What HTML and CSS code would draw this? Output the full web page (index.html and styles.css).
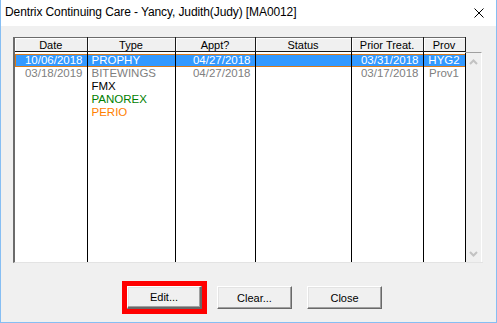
FILE: index.html
```html
<!DOCTYPE html>
<html lang="en">
<head>
  <meta charset="UTF-8">
  <title>Dentrix Continuing Care</title>
  <link rel="stylesheet" href="styles.css">
</head>
<body>
  <div id="window">
    <div class="titlebar">
      <span class="title">Dentrix Continuing Care - Yancy, Judith(Judy) [MA0012]</span>
      <svg class="close-x" width="10" height="10" viewBox="0 0 10 10">
        <path d="M0.5 0.5 L9.5 9.5 M9.5 0.5 L0.5 9.5" stroke="#000" stroke-width="1" fill="none"/>
      </svg>
    </div>
    <div class="content">
      <div class="listview">
        <div class="grid">
          <table>
            <thead>
              <tr>
                <th class="c-date">Date</th>
                <th class="c-type">Type</th>
                <th class="c-appt">Appt?</th>
                <th class="c-status">Status</th>
                <th class="c-prior">Prior Treat.</th>
                <th class="c-prov">Prov</th>
              </tr>
            </thead>
            <tbody>
              <tr class="gap"><td></td><td></td><td></td><td></td><td></td><td></td></tr>
              <tr class="selected">
                <td class="num">10/06/2018</td>
                <td>PROPHY</td>
                <td class="num">04/27/2018</td>
                <td></td>
                <td class="num">03/31/2018</td>
                <td class="mid">HYG2</td>
              </tr>
              <tr class="dim">
                <td class="num">03/18/2019</td>
                <td>BITEWINGS</td>
                <td class="num">04/27/2018</td>
                <td></td>
                <td class="num">03/17/2018</td>
                <td class="mid">Prov1</td>
              </tr>
              <tr>
                <td></td><td>FMX</td><td></td><td></td><td></td><td></td>
              </tr>
              <tr>
                <td></td><td class="t-green">PANOREX</td><td></td><td></td><td></td><td></td>
              </tr>
              <tr>
                <td></td><td class="t-orange">PERIO</td><td></td><td></td><td></td><td></td>
              </tr>
              <tr class="filler"><td></td><td></td><td></td><td></td><td></td><td></td></tr>
            </tbody>
          </table>
        </div>
        <div class="scrollbar">
          <svg class="arrow" width="9" height="6" viewBox="0 0 9 6">
            <path d="M1 5 L4.5 1.5 L8 5" stroke="#c2c2c2" stroke-width="2" fill="none"/>
          </svg>
          <svg class="arrow" width="9" height="6" viewBox="0 0 9 6">
            <path d="M1 1 L4.5 4.5 L8 1" stroke="#c2c2c2" stroke-width="2" fill="none"/>
          </svg>
        </div>
      </div>
      <div class="buttons">
        <button class="btn default">Edit...</button>
        <button class="btn">Clear...</button>
        <button class="btn">Close</button>
      </div>
    </div>
  </div>
</body>
</html>
```

FILE: styles.css
```css
* {
  box-sizing: border-box;
}
body {
  margin: 0;
  font-family: 'Liberation Sans', Arial, sans-serif;
  font-size: 11px;
  background: #f0f0f0;
}
#window {
  width: 497px;
  height: 323px;
  border: 1px solid #86bef3;
  border-top: none;
  background: #f0f0f0;
  display: flex;
  flex-direction: column;
}
.titlebar {
  height: 26px;
  background: #ffffff;
  display: flex;
  align-items: center;
  justify-content: space-between;
  padding: 0 12px 2px 4px;
}
.title {
  font-size: 12px;
  letter-spacing: -0.1px;
  color: #000;
}
.close-x {
  margin-top: 2px;
}
.content {
  flex: 1;
  padding: 11px 13px 0 12px;
}
.listview {
  height: 226px;
  display: flex;
  border-left: 2px solid #6b6b6b;
  border-bottom: 1px solid #e3e3e3;
}
.grid {
  width: 450px;
  height: 100%;
  background: #ffffff;
}
table {
  width: 450px;
  height: 100%;
  border-collapse: collapse;
  table-layout: fixed;
}
th {
  height: 14px;
  padding: 0;
  font-weight: normal;
  text-align: center;
  line-height: 12px;
  background: #f0f0f0;
  border-top: 1px solid #6b6b6b;
  border-bottom: 1px solid #1a1a1a;
  border-right: 1px solid #1a1a1a;
  box-shadow: inset 1px 1px #ffffff;
}
.c-date { width: 72px; }
.c-type { width: 88px; }
.c-appt { width: 80px; }
.c-status { width: 96px; }
.c-prior { width: 72px; }
.c-prov { width: 42px; }
td {
  height: 13px;
  padding: 0 4px;
  font-size: 11.5px;
  line-height: 13px;
  white-space: nowrap;
  color: #000;
  border-right: 1px solid #000;
}
tr.gap td {
  height: 2px;
  line-height: 2px;
}
tr.filler td {
  height: auto;
}
td.num { text-align: right; }
td.mid { text-align: center; padding: 0; }
tr.selected td {
  background: #3399ff;
  color: #ffffff;
  box-shadow: inset 0 1px #d97a1a, inset 0 -1px #d97a1a;
}
tr.selected td:first-child {
  box-shadow: inset 0 1px #d97a1a, inset 0 -1px #d97a1a, inset 1px 0 #d97a1a;
}
tr.dim td { color: #808080; }
.t-green { color: #008000; }
.t-orange { color: #ff8000; }
.scrollbar {
  width: 17px;
  margin-top: 15px;
  border-top: 1px solid #a0a0a0;
  border-right: 1px solid #ffffff;
  display: flex;
  flex-direction: column;
  justify-content: space-between;
  align-items: center;
  padding: 6px 0 5px;
}
.buttons {
  display: flex;
  gap: 15px;
  padding: 23px 0 0 114px;
}
.btn {
  width: 75px;
  height: 23px;
  padding: 0;
  font-family: 'Liberation Sans', Arial, sans-serif;
  font-size: 11px;
  color: #000;
  background: #f0f0f0;
  border: 1px solid;
  border-color: #ffffff #696969 #696969 #ffffff;
  box-shadow: inset -1px -1px #a0a0a0, inset 1px 1px #e3e3e3;
}
.btn.default {
  border-width: 1px 2px 2px 1px;
  outline: 5px solid #ff0000;
}
```
